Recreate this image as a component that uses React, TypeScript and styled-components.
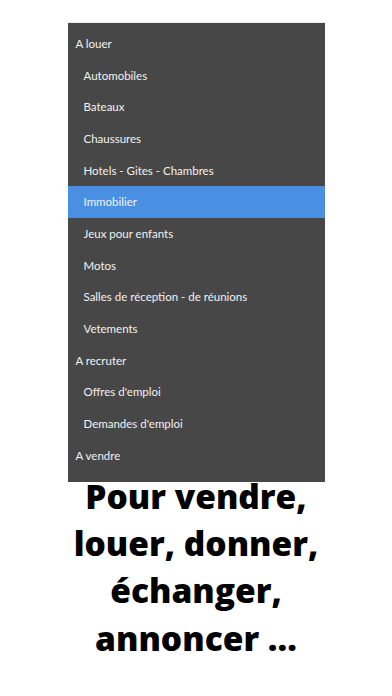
import React from 'react';
import styled, { createGlobalStyle } from 'styled-components';

const GlobalStyle = createGlobalStyle`
  html, body {
    margin: 0;
    padding: 0;
    background: #ffffff;
  }
  body {
    font-family: Lato, "Open Sans", sans-serif;
  }
`;

const Page = styled.div`
  width: 392px;
  height: 696px;
  display: flex;
  flex-direction: column;
  align-items: center;
  padding-top: 23px;
  box-sizing: border-box;
`;

const Menu = styled.ul`
  list-style: none;
  margin: 0;
  width: 257px;
  padding: 5px 0 10px;
  background: #474747;
  box-shadow: 0 -1px 0 #ececec;
`;

const Item = styled.li<{ $sub?: boolean; $active?: boolean }>`
  height: 31.7px;
  display: flex;
  align-items: center;
  padding-left: ${(p) => (p.$sub ? 16 : 8)}px;
  padding-bottom: 1px;
  box-sizing: border-box;
  background: ${(p) => (p.$active ? '#4a90e2' : 'transparent')};
  color: #f2f2f2;
  font-size: 11.5px;
`;

const Tagline = styled.h1`
  margin: -9px 0 0;
  text-align: center;
  font-family: "Open Sans", sans-serif;
  font-weight: 800;
  font-size: 33.5px;
  line-height: 47.3px;
  color: #000;
`;

const entries: { label: string; sub?: boolean; active?: boolean }[] = [
  { label: 'A louer' },
  { label: 'Automobiles', sub: true },
  { label: 'Bateaux', sub: true },
  { label: 'Chaussures', sub: true },
  { label: 'Hotels - Gites - Chambres', sub: true },
  { label: 'Immobilier', sub: true, active: true },
  { label: 'Jeux pour enfants', sub: true },
  { label: 'Motos', sub: true },
  { label: 'Salles de réception - de réunions', sub: true },
  { label: 'Vetements', sub: true },
  { label: 'A recruter' },
  { label: "Offres d'emploi", sub: true },
  { label: "Demandes d'emploi", sub: true },
  { label: 'A vendre' },
];

function App() {
  return (
    <Page>
      <GlobalStyle />
      <Menu>
        {entries.map((e) => (
          <Item key={e.label} $sub={e.sub} $active={e.active}>
            {e.label}
          </Item>
        ))}
      </Menu>
      <Tagline>
        Pour vendre,
        <br />
        louer, donner,
        <br />
        échanger,
        <br />
        annoncer ...
      </Tagline>
    </Page>
  );
}

export default App;
